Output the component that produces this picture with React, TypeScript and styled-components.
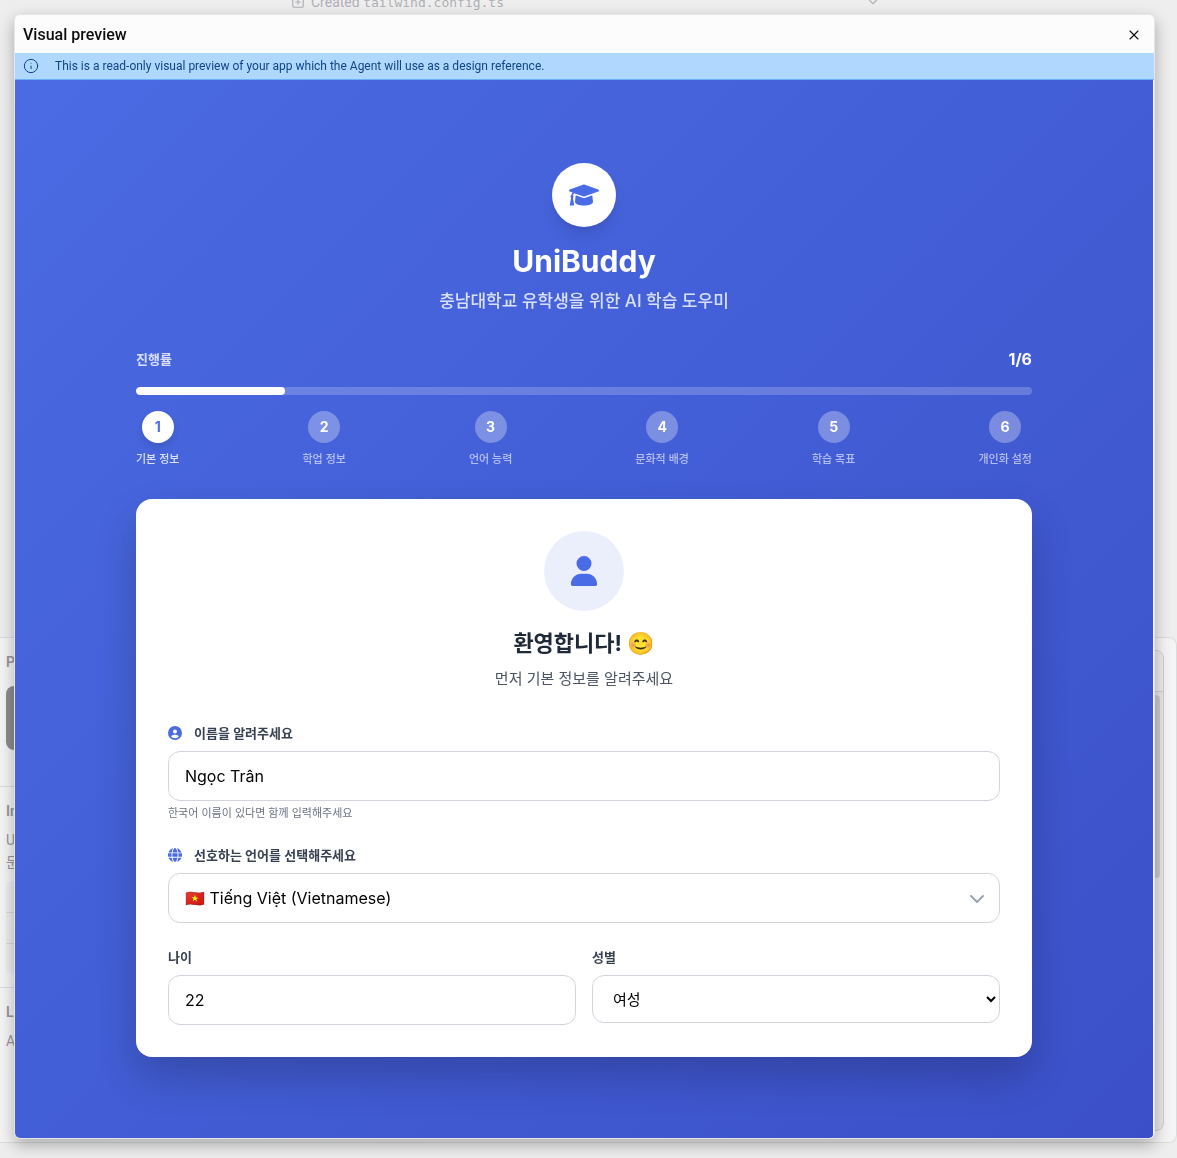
import React, { useState } from "react";
import styled, { createGlobalStyle } from "styled-components";
import { FaUser, FaCircleUser, FaGlobe, FaChevronDown } from "react-icons/fa6";
import { ChevronDown, Info, SquarePlus, X } from "lucide-react";

const appFont = `Inter, "Noto Sans CJK KR", "Noto Color Emoji", sans-serif`;
const shellFont = `Roboto, "Noto Sans CJK KR", sans-serif`;

const GlobalStyle = createGlobalStyle`
  *, *::before, *::after { box-sizing: border-box; }
  body { margin: 0; background: #eeeeef; font-family: ${shellFont}; }
  h1, h2, p { margin: 0; }
`;

/* ---------- dimmed workspace behind the dialog ---------- */

const Workspace = styled.div`
  display: flex;
  flex-direction: column;
  justify-content: space-between;
  height: 100vh;
  padding-bottom: 15px;
  overflow: hidden;
  color: #97979a;
`;

const LogLine = styled.div`
  display: flex;
  align-items: center;
  gap: 6px;
  width: 50%;
  height: 20px;
  margin: -8px 0 0 291px;
  font-size: 14px;
  line-height: 20px;
  color: #b0b0b3;

  code {
    font-family: "DejaVu Sans Mono", monospace;
    font-size: 13px;
  }
  svg:last-child {
    margin-left: auto;
  }
`;

const Board = styled.div`
  display: flex;
  justify-content: space-between;
  height: 506px;
  border: 1px solid #dcdcde;
  border-left: 0;
  border-radius: 0 8px 8px 0;
  background: #f4f4f5;
`;

const Notes = styled.div`
  width: 50%;
`;

const NoteSection = styled.div<{ $height: number }>`
  height: ${(p) => p.$height}px;
  padding: 14px 0 0 6px;
  border-bottom: 1px solid #dcdcde;

  &:last-child {
    border-bottom: 0;
  }
`;

const NoteTitle = styled.div`
  font-size: 14px;
  font-weight: 600;
  line-height: 20px;
`;

const NoteText = styled.div`
  margin-top: 8px;
  font-size: 14px;
  line-height: 22px;
`;

const Thumb = styled.div`
  height: 64px;
  margin-top: 14px;
  border-radius: 8px;
  background: #8c8c8c;
`;

const NoteTable = styled.div`
  display: grid;
  grid-template-rows: repeat(3, 1fr);
  height: 93px;
  margin-top: 8px;
  border-radius: 6px;
  background: #ededee;

  div + div {
    border-top: 1px solid #d8d8da;
  }
`;

const PreviewPane = styled.div`
  display: flex;
  flex-direction: column;
  align-items: flex-end;
  width: 40%;
  margin: 12px 12px 11px 0;
  border: 1px solid #cfcfd1;
  border-radius: 8px;
  background: #e8e8e8;
  overflow: hidden;
`;

const PaneHeader = styled.div`
  width: 100%;
  height: 41px;
  border-bottom: 1px solid #cfcfd1;
  background: #ececee;
`;

const PaneScroll = styled.div`
  width: 8px;
  height: 183px;
  margin: 3px 3px 0 0;
  border-radius: 4px;
  background: #cbcbcb;
`;

/* ---------- dialog ---------- */

const Dialog = styled.section`
  position: fixed;
  inset: 14px 22px 19px 14px;
  display: flex;
  flex-direction: column;
  border: 1px solid #e6e6e9;
  border-radius: 6px;
  background: #fcfcfc;
  box-shadow: 0 6px 16px rgba(0, 0, 0, 0.3);
  overflow: hidden;
`;

const DialogHeader = styled.header`
  display: flex;
  align-items: center;
  justify-content: space-between;
  flex: none;
  height: 38px;
  padding: 2px 12px 0 8px;
`;

const DialogTitle = styled.h1`
  font-size: 16px;
  font-weight: 500;
  line-height: 24px;
  color: #0d0d0f;
`;

const CloseButton = styled.button`
  display: flex;
  padding: 0;
  border: 0;
  background: none;
  color: #0d0d0f;
  cursor: pointer;
`;

const Banner = styled.div`
  display: flex;
  align-items: center;
  flex: none;
  gap: 16px;
  height: 27px;
  padding: 0 8px;
  border-bottom: 1px solid #6bb0fb;
  background: #b0d8ff;
  color: #0f4383;
  font-size: 12px;
  line-height: 16px;
`;

const Stage = styled.main`
  display: flex;
  flex: 1;
  flex-direction: column;
  min-height: 0;
  margin-right: 1px;
  padding: 18px 16px 16px;
  overflow: auto;
  border-radius: 0 0 4px 4px;
  background: linear-gradient(135deg, #4a6be3 0%, #3b50c8 100%);
  font-family: ${appFont};
  color: #ffffff;
`;

const Column = styled.div`
  width: 100%;
  max-width: 896px;
  margin: auto;
`;

const Intro = styled.div`
  display: flex;
  flex-direction: column;
  align-items: center;
  text-align: center;
`;

const LogoDisc = styled.div`
  display: grid;
  place-items: center;
  width: 64px;
  height: 64px;
  margin-bottom: 16px;
  border-radius: 50%;
  background: #ffffff;
  color: #4a6be6;
  box-shadow: 0 10px 15px -3px rgba(0, 0, 0, 0.1), 0 4px 6px -4px rgba(0, 0, 0, 0.1);
`;

const Brand = styled.h1`
  margin-bottom: 8px;
  font-size: 30px;
  font-weight: 700;
  line-height: 36px;
`;

const Tagline = styled.p`
  font-size: 17px;
  font-weight: 500;
  line-height: 28px;
  color: rgba(255, 255, 255, 0.8);
`;

const ProgressHead = styled.div`
  display: flex;
  align-items: center;
  justify-content: space-between;
  height: 24px;
  margin: 32px 0 16px;
`;

const ProgressLabel = styled.span`
  font-size: 13px;
  font-weight: 600;
  line-height: 20px;
  color: rgba(255, 255, 255, 0.8);
`;

const ProgressCount = styled.span`
  font-size: 16px;
  font-weight: 700;
  line-height: 24px;
`;

const Track = styled.div`
  height: 8px;
  border-radius: 4px;
  background: rgba(255, 255, 255, 0.2);
  overflow: hidden;
`;

const Fill = styled.div`
  height: 100%;
  border-radius: 4px;
  background: #ffffff;
`;

const Steps = styled.ol`
  display: flex;
  justify-content: space-between;
  margin: 16px 0 32px;
  padding: 0;
  list-style: none;
`;

const Step = styled.li<{ $active: boolean }>`
  display: flex;
  flex-direction: column;
  align-items: center;
  gap: 8px;
  font-size: 11px;
  font-weight: 500;
  line-height: 16px;
  color: rgba(255, 255, 255, ${(p) => (p.$active ? 0.8 : 0.6)});
`;

const StepDot = styled.span<{ $active: boolean }>`
  display: grid;
  place-items: center;
  width: 32px;
  height: 32px;
  border-radius: 50%;
  background: ${(p) => (p.$active ? "#ffffff" : "rgba(255, 255, 255, 0.3)")};
  color: ${(p) => (p.$active ? "#4a6be6" : "#ffffff")};
  font-size: 14px;
  font-weight: 700;
  box-shadow: ${(p) => (p.$active ? "0 4px 8px rgba(0, 0, 0, 0.12)" : "none")};
`;

const Card = styled.form`
  padding: 32px;
  border-radius: 16px;
  background: #ffffff;
  box-shadow: 0 20px 40px rgba(0, 0, 0, 0.2);
`;

const AvatarDisc = styled.div`
  display: grid;
  place-items: center;
  width: 80px;
  height: 80px;
  margin-bottom: 16px;
  border-radius: 50%;
  background: #ebeffc;
  color: #4a6be6;
`;

const Welcome = styled.h2`
  margin-bottom: 8px;
  font-size: 22px;
  font-weight: 700;
  line-height: 32px;
  color: #1f2937;
`;

const Lead = styled.p`
  margin-bottom: 32px;
  font-size: 15px;
  line-height: 24px;
  color: #4b5563;
`;

const Fields = styled.div`
  display: flex;
  flex-direction: column;
  gap: 24px;
`;

const Pair = styled.div`
  display: grid;
  grid-template-columns: 1fr 1fr;
  align-items: start;
  gap: 16px;
`;

const Label = styled.label`
  display: flex;
  align-items: center;
  gap: 12px;
  height: 20px;
  margin-bottom: 8px;
  font-size: 13px;
  font-weight: 600;
  line-height: 20px;
  color: #374151;

  svg {
    color: #4a6be6;
  }
`;

const controlStyle = `
  display: block;
  width: 100%;
  border: 1px solid #d1d5db;
  border-radius: 12px;
  background-color: #ffffff;
  color: #000000;
  font-family: ${appFont};
`;

const TextInput = styled.input`
  ${controlStyle}
  height: 50px;
  padding: 12px 16px;
  font-size: 16px;
`;

const LanguageWrap = styled.div`
  position: relative;

  svg {
    position: absolute;
    top: 17px;
    right: 15px;
    color: #9ca3af;
    pointer-events: none;
  }
`;

const LanguageSelect = styled.select`
  ${controlStyle}
  appearance: none;
  height: 50px;
  padding: 12px 16px;
  font-size: 16px;
`;

const NativeSelect = styled.select`
  ${controlStyle}
  height: 48px;
  padding: 12px 16px;
  font-size: 15px;
`;

const Hint = styled.p`
  margin-top: 4px;
  font-size: 11px;
  line-height: 16px;
  color: #6b7280;
`;

function GraduationCap() {
  return (
    <svg width="30" height="24" viewBox="0 0 640 512" fill="currentColor" aria-hidden="true">
      <path d="M623.1 136.9l-282.7-101.2c-13.73-4.91-28.7-4.91-42.43 0L16.05 136.9C6.438 140.4 0 149.6 0 160s6.438 19.65 16.05 23.09L76.07 204.6c-11.89 15.8-20.26 34.16-24.55 53.95C40.05 263.4 32 274.8 32 288c0 9.953 4.814 18.49 11.94 24.36l-24.83 149C17.48 471.1 25 480 34.89 480H93.11c9.887 0 17.41-8.879 15.78-18.63l-24.83-149C91.19 306.5 96 297.1 96 288c0-10.29-5.174-19.03-12.72-24.89c4.252-17.76 12.88-33.82 24.94-47.03l190.6 68.23c13.73 4.91 28.7 4.91 42.43 0l282.7-101.2C633.6 179.6 640 170.4 640 160S633.6 140.4 623.1 136.9zM351.1 314.4C341.7 318.1 330.9 320 320 320c-10.92 0-21.69-1.867-32-5.555L142.8 262.5L128 405.3C128 446.6 213.1 480 320 480c105.1 0 192-33.4 192-74.67l-14.78-142.9L351.1 314.4z" />
    </svg>
  );
}

const steps = ["기본 정보", "학업 정보", "언어 능력", "문화적 배경", "학습 목표", "개인화 설정"];

export default function App() {
  const [current] = useState(1);

  return (
    <>
      <GlobalStyle />
      <Workspace aria-hidden="true">
        <LogLine>
          <SquarePlus size={14} />
          <span>
            Created <code>tailwind.config.ts</code>
          </span>
          <ChevronDown size={14} />
        </LogLine>
        <Board>
          <Notes>
            <NoteSection $height={149}>
              <NoteTitle>P</NoteTitle>
              <Thumb />
            </NoteSection>
            <NoteSection $height={201}>
              <NoteTitle>In</NoteTitle>
              <NoteText>
                U<br />문
              </NoteText>
              <NoteTable>
                <div />
                <div />
                <div />
              </NoteTable>
            </NoteSection>
            <NoteSection $height={150}>
              <NoteTitle>L</NoteTitle>
              <NoteText>A</NoteText>
            </NoteSection>
          </Notes>
          <PreviewPane>
            <PaneHeader />
            <PaneScroll />
          </PreviewPane>
        </Board>
      </Workspace>

      <Dialog role="dialog" aria-labelledby="dialog-title">
        <DialogHeader>
          <DialogTitle id="dialog-title">Visual preview</DialogTitle>
          <CloseButton type="button" aria-label="Close">
            <X size={16} strokeWidth={1.6} />
          </CloseButton>
        </DialogHeader>
        <Banner>
          <Info size={16} strokeWidth={1.5} />
          <span>This is a read-only visual preview of your app which the Agent will use as a design reference.</span>
        </Banner>
        <Stage>
          <Column>
            <Intro>
              <LogoDisc>
                <GraduationCap />
              </LogoDisc>
              <Brand>UniBuddy</Brand>
              <Tagline>충남대학교 유학생을 위한 AI 학습 도우미</Tagline>
            </Intro>

            <ProgressHead>
              <ProgressLabel>진행률</ProgressLabel>
              <ProgressCount>
                {current}/{steps.length}
              </ProgressCount>
            </ProgressHead>
            <Track>
              <Fill style={{ width: `${(current / steps.length) * 100}%` }} />
            </Track>
            <Steps>
              {steps.map((name, i) => (
                <Step key={name} $active={i + 1 === current}>
                  <StepDot $active={i + 1 === current}>{i + 1}</StepDot>
                  {name}
                </Step>
              ))}
            </Steps>

            <Card>
              <Intro>
                <AvatarDisc>
                  <FaUser size={30} />
                </AvatarDisc>
                <Welcome>환영합니다! 😊</Welcome>
                <Lead>먼저 기본 정보를 알려주세요</Lead>
              </Intro>
              <Fields>
                <div>
                  <Label htmlFor="name">
                    <FaCircleUser size={14} />
                    이름을 알려주세요
                  </Label>
                  <TextInput id="name" type="text" defaultValue="Ngọc Trân" />
                  <Hint>한국어 이름이 있다면 함께 입력해주세요</Hint>
                </div>
                <div>
                  <Label htmlFor="language">
                    <FaGlobe size={14} />
                    선호하는 언어를 선택해주세요
                  </Label>
                  <LanguageWrap>
                    <LanguageSelect id="language" defaultValue="vi">
                      <option value="vi">🇻🇳 Tiếng Việt (Vietnamese)</option>
                    </LanguageSelect>
                    <FaChevronDown size={16} />
                  </LanguageWrap>
                </div>
                <Pair>
                  <div>
                    <Label htmlFor="age">나이</Label>
                    <TextInput id="age" type="text" inputMode="numeric" defaultValue="22" />
                  </div>
                  <div>
                    <Label htmlFor="gender">성별</Label>
                    <NativeSelect id="gender" defaultValue="female">
                      <option value="female">여성</option>
                    </NativeSelect>
                  </div>
                </Pair>
              </Fields>
            </Card>
          </Column>
        </Stage>
      </Dialog>
    </>
  );
}
